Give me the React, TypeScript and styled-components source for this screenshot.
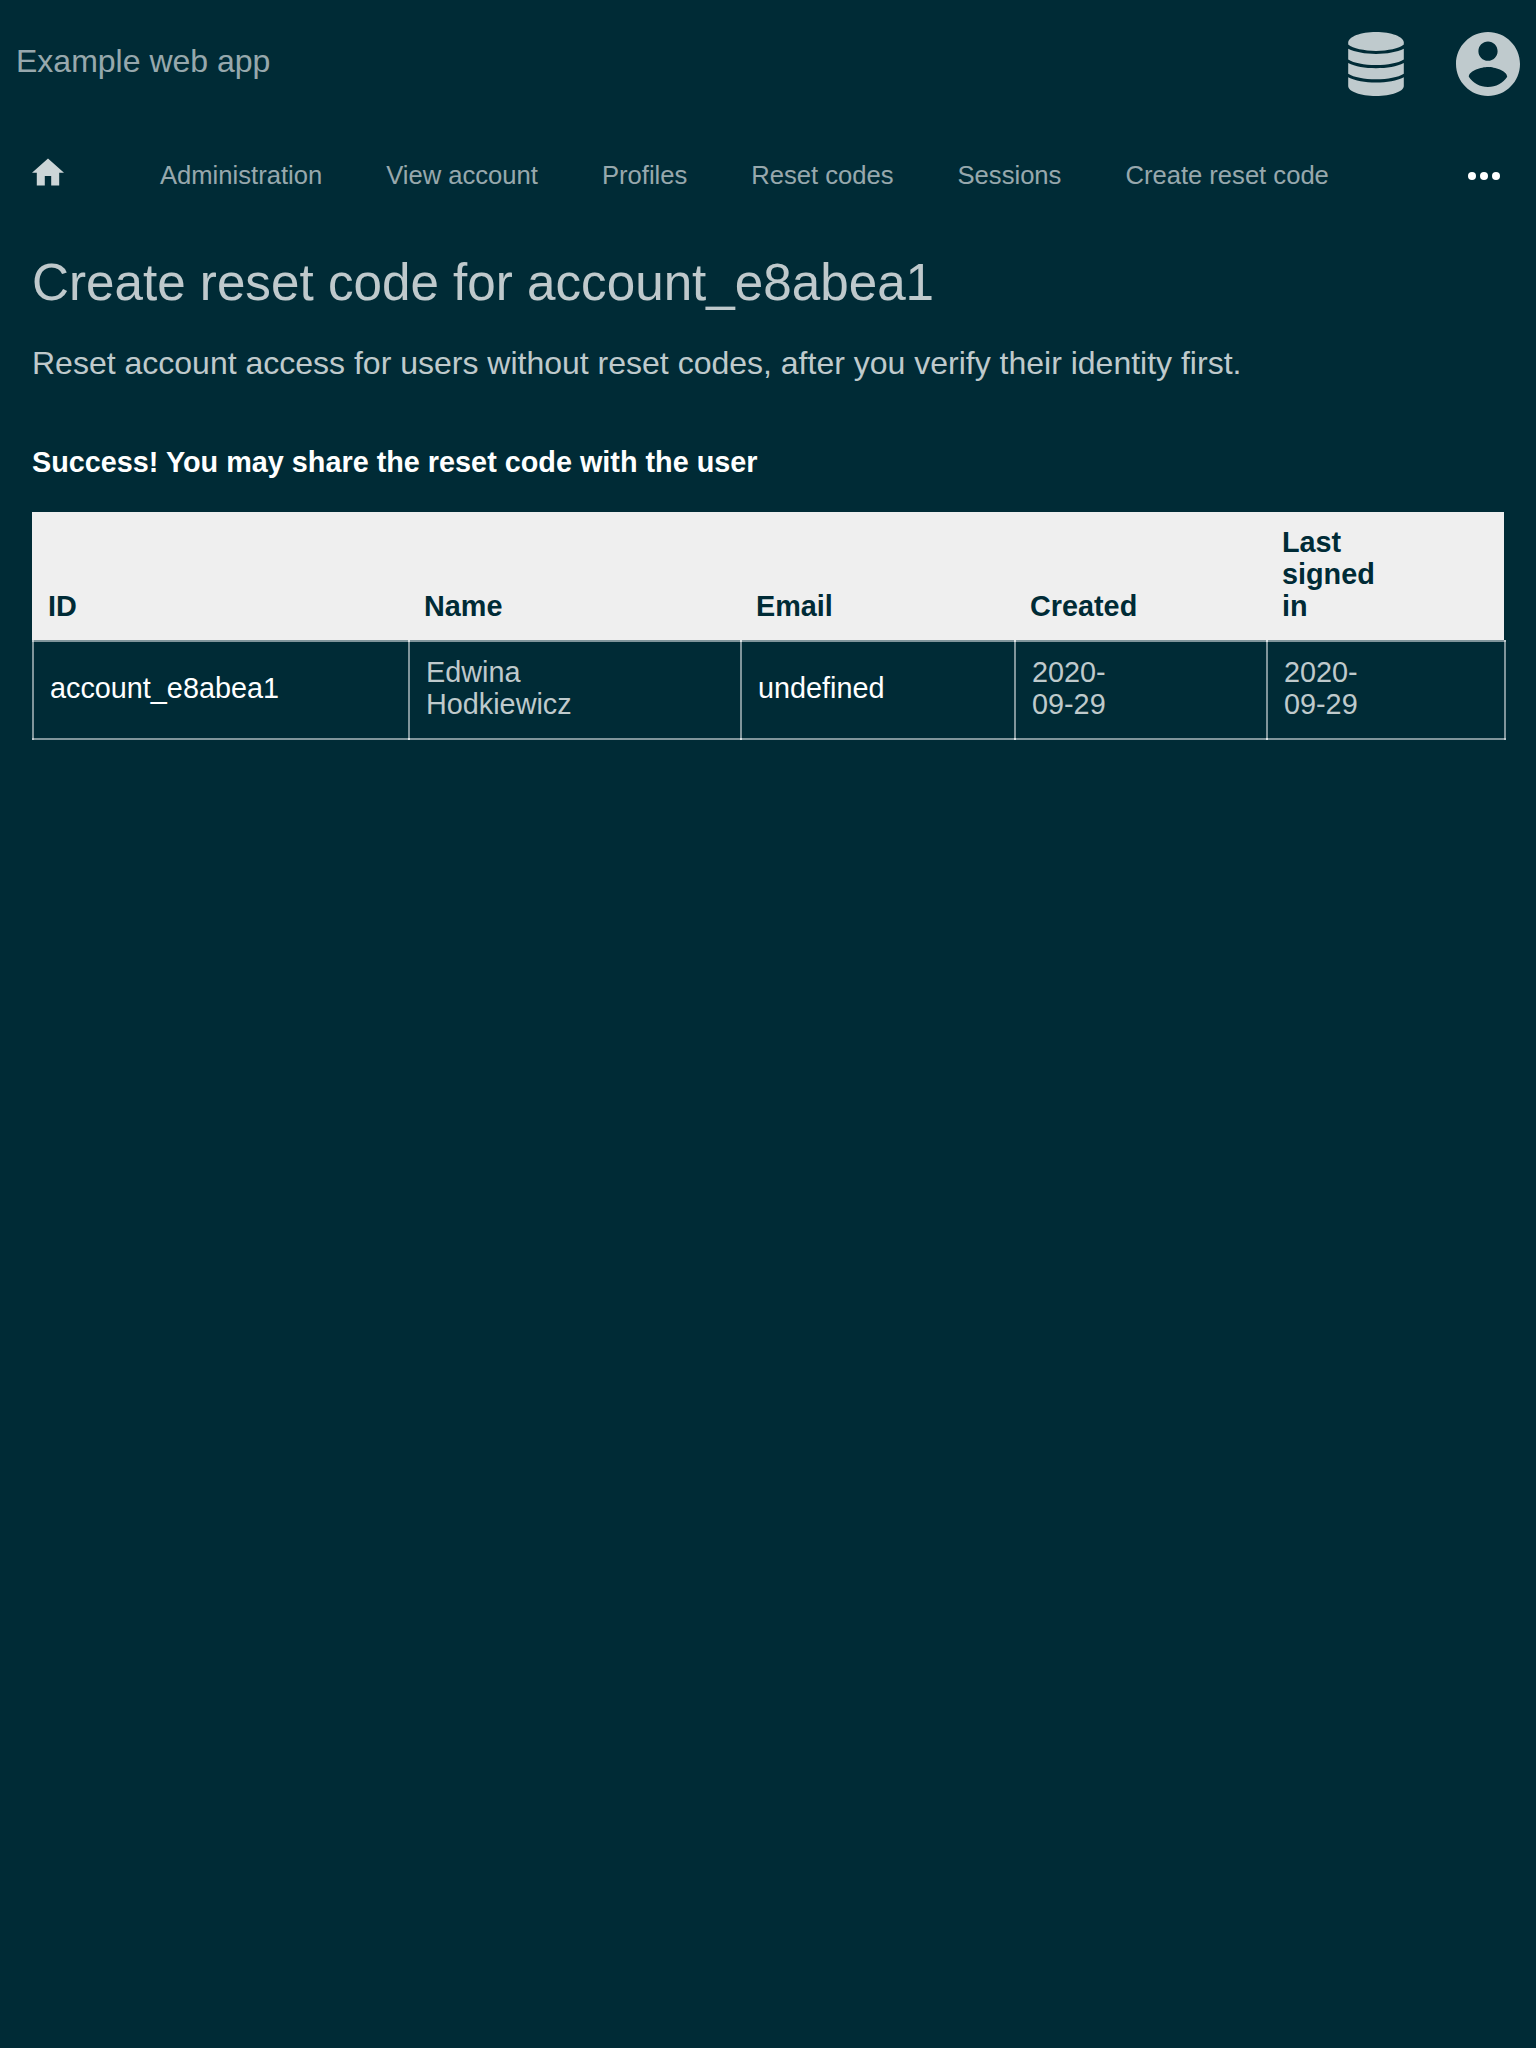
import React from "react";
import styled, { createGlobalStyle } from "styled-components";
import { MdHome } from "react-icons/md";

const Global = createGlobalStyle`
  *, *::before, *::after { box-sizing: border-box; }
  body {
    margin: 0;
    background: #002b36;
    color: rgba(255, 255, 255, 0.75);
    font-family: "Liberation Sans", Arial, sans-serif;
  }
`;

const Page = styled.div`
  min-height: 2048px;
`;

const Header = styled.header`
  display: flex;
  align-items: center;
  justify-content: space-between;
  height: 128px;
  padding: 0 16px;
`;

const AppTitle = styled.a`
  margin-top: -6px;
  color: rgba(255, 255, 255, 0.6);
  font-size: 32px;
  line-height: 36px;
`;

const HeaderIcons = styled.div`
  display: flex;
  gap: 48px;
`;

const HeaderIcon = styled.svg`
  display: block;
  width: 64px;
  height: 64px;
  fill: #bfcacd;
`;

const Nav = styled.nav`
  display: flex;
  align-items: center;
  height: 96px;
  padding: 0 36px 0 32px;
`;

const HomeLink = styled.a`
  display: flex;
  width: 32px;
  height: 32px;
  margin: -8px 96px 0 0;
  color: #ccd5d7;
`;

const NavLinks = styled.div`
  display: flex;
  flex: 1;
  gap: 64px;
  margin-top: -2px;
`;

const NavLink = styled.a`
  color: rgba(255, 255, 255, 0.6);
  font-size: 25.6px;
  line-height: 32px;
  white-space: nowrap;
`;

const More = styled.svg`
  width: 32px;
  height: 8px;
  fill: #fff;
`;

const Main = styled.main`
  padding: 30px 32px;
`;

const Title = styled.h1`
  margin: 0;
  font-size: 51.2px;
  font-weight: 400;
  line-height: 58px;
`;

const Lead = styled.p`
  margin: 32px 0 0;
  font-size: 32px;
  line-height: 38px;
`;

const Success = styled.p`
  margin: 63px 0 33px;
  color: #fff;
  font-size: 28.8px;
  font-weight: 700;
  line-height: 34px;
`;

const columns = "376px 332px 274px 252px 1fr";

const HeadRow = styled.div`
  display: grid;
  grid-template-columns: ${columns};
  align-items: end;
  height: 128px;
  padding-bottom: 18px;
  background: #efefef;
  color: #002b36;
`;

const HeadCell = styled.div<{ $wrap?: string }>`
  max-width: ${(p) => p.$wrap ?? "none"};
  padding: 0 16px;
  font-size: 28.8px;
  font-weight: 700;
  line-height: 32px;
`;

const BodyRow = styled.div`
  display: grid;
  grid-template-columns: ${columns};
  width: 1474px;
  height: 100px;
`;

const line = "#80959b";
const corner = "#bfcacd";
const crossing = "#dfe5e6";

const dot = (color: string, place: string) =>
  `linear-gradient(${color}, ${color}) ${place} / 2px 2px no-repeat`;
const rule = (place: string, size: string) =>
  `linear-gradient(${line}, ${line}) ${place} / ${size} no-repeat`;

const BodyCell = styled.div<{ $link?: boolean }>`
  display: flex;
  align-items: center;
  padding: 2px 18px 6px;
  background: ${dot(crossing, "0 0")}, ${dot(crossing, "0 100%")},
    ${rule("0 0", "100% 2px")}, ${rule("0 100%", "100% 2px")},
    ${rule("0 0", "2px 100%")};
  color: ${(p) => (p.$link ? "#fff" : "rgba(255, 255, 255, 0.75)")};
  font-size: 28.8px;
  line-height: 32px;

  &:first-child {
    background: ${dot(corner, "0 0")}, ${dot(corner, "0 100%")},
      ${rule("0 0", "100% 2px")}, ${rule("0 100%", "100% 2px")},
      ${rule("0 0", "2px 100%")};
  }

  &:last-child {
    background: ${dot(crossing, "0 0")}, ${dot(crossing, "0 100%")},
      ${dot(corner, "100% 0")}, ${dot(corner, "100% 100%")},
      ${rule("0 0", "100% 2px")}, ${rule("0 100%", "100% 2px")},
      ${rule("0 0", "2px 100%")}, ${rule("100% 0", "2px 100%")};
  }
`;

const CellText = styled.span<{ $width?: string }>`
  width: ${(p) => p.$width ?? "auto"};
`;

const links = [
  "Administration",
  "View account",
  "Profiles",
  "Reset codes",
  "Sessions",
  "Create reset code",
];

const fields = [
  { label: "ID", value: "account_e8abea1", link: true },
  { label: "Name", value: "Edwina Hodkiewicz", width: "160px" },
  { label: "Email", value: "undefined", link: true },
  { label: "Created", value: "2020-09-29", width: "90px" },
  { label: "Last signed in", value: "2020-09-29", width: "90px", wrap: "135px" },
];

export default function App() {
  return (
    <Page>
      <Global />
      <Header>
        <AppTitle>Example web app</AppTitle>
        <HeaderIcons>
          <HeaderIcon viewBox="0 0 64 64">
            <path d="M4.2 10.5C4.2 4.7 16.7 0 32 0S59.8 4.7 59.8 10.5V12.6C55 16.6 44 18.9 32 18.9S9 16.6 4.2 12.6Z" />
            <path d="M4.2 16.8C11 20.2 21 21.9 32 21.9S53 20.2 59.8 16.8V27.4C54 31 44 32.9 32 32.9S10 31 4.2 27.4Z" />
            <path d="M4.2 31C11 34.5 21 36.2 32 36.2S53 34.5 59.8 31V41.8C54 45.4 44 47.3 32 47.3S10 45.4 4.2 41.8Z" />
            <path d="M4.2 45.3C11 48.8 21 50.6 32 50.6S53 48.8 59.8 45.3V54C59.8 59.5 47.4 64 32 64S4.2 59.5 4.2 54Z" />
          </HeaderIcon>
          <HeaderIcon viewBox="2 2 20 20">
            <path d="M12 2C6.48 2 2 6.48 2 12s4.48 10 10 10 10-4.48 10-10S17.52 2 12 2zm0 3c1.66 0 3 1.34 3 3s-1.34 3-3 3-3-1.34-3-3 1.34-3 3-3zm0 14.2c-2.5 0-4.71-1.28-6-3.22.03-1.99 4-3.08 6-3.08 1.99 0 5.97 1.09 6 3.08-1.29 1.94-3.5 3.22-6 3.22z" />
          </HeaderIcon>
        </HeaderIcons>
      </Header>
      <Nav>
        <HomeLink>
          <MdHome size={32} viewBox="2 1.5 20 20" />
        </HomeLink>
        <NavLinks>
          {links.map((l) => (
            <NavLink key={l}>{l}</NavLink>
          ))}
        </NavLinks>
        <More viewBox="0 0 32 8">
          <circle cx="4" cy="4" r="4" />
          <circle cx="16" cy="4" r="4" />
          <circle cx="28" cy="4" r="4" />
        </More>
      </Nav>
      <Main>
        <Title>Create reset code for account_e8abea1</Title>
        <Lead>
          Reset account access for users without reset codes, after you verify
          their identity first.
        </Lead>
        <Success>Success! You may share the reset code with the user</Success>
        <HeadRow>
          {fields.map((f) => (
            <HeadCell key={f.label} $wrap={f.wrap}>
              {f.label}
            </HeadCell>
          ))}
        </HeadRow>
        <BodyRow>
          {fields.map((f) => (
            <BodyCell key={f.label} $link={f.link}>
              <CellText $width={f.width}>{f.value}</CellText>
            </BodyCell>
          ))}
        </BodyRow>
      </Main>
    </Page>
  );
}
